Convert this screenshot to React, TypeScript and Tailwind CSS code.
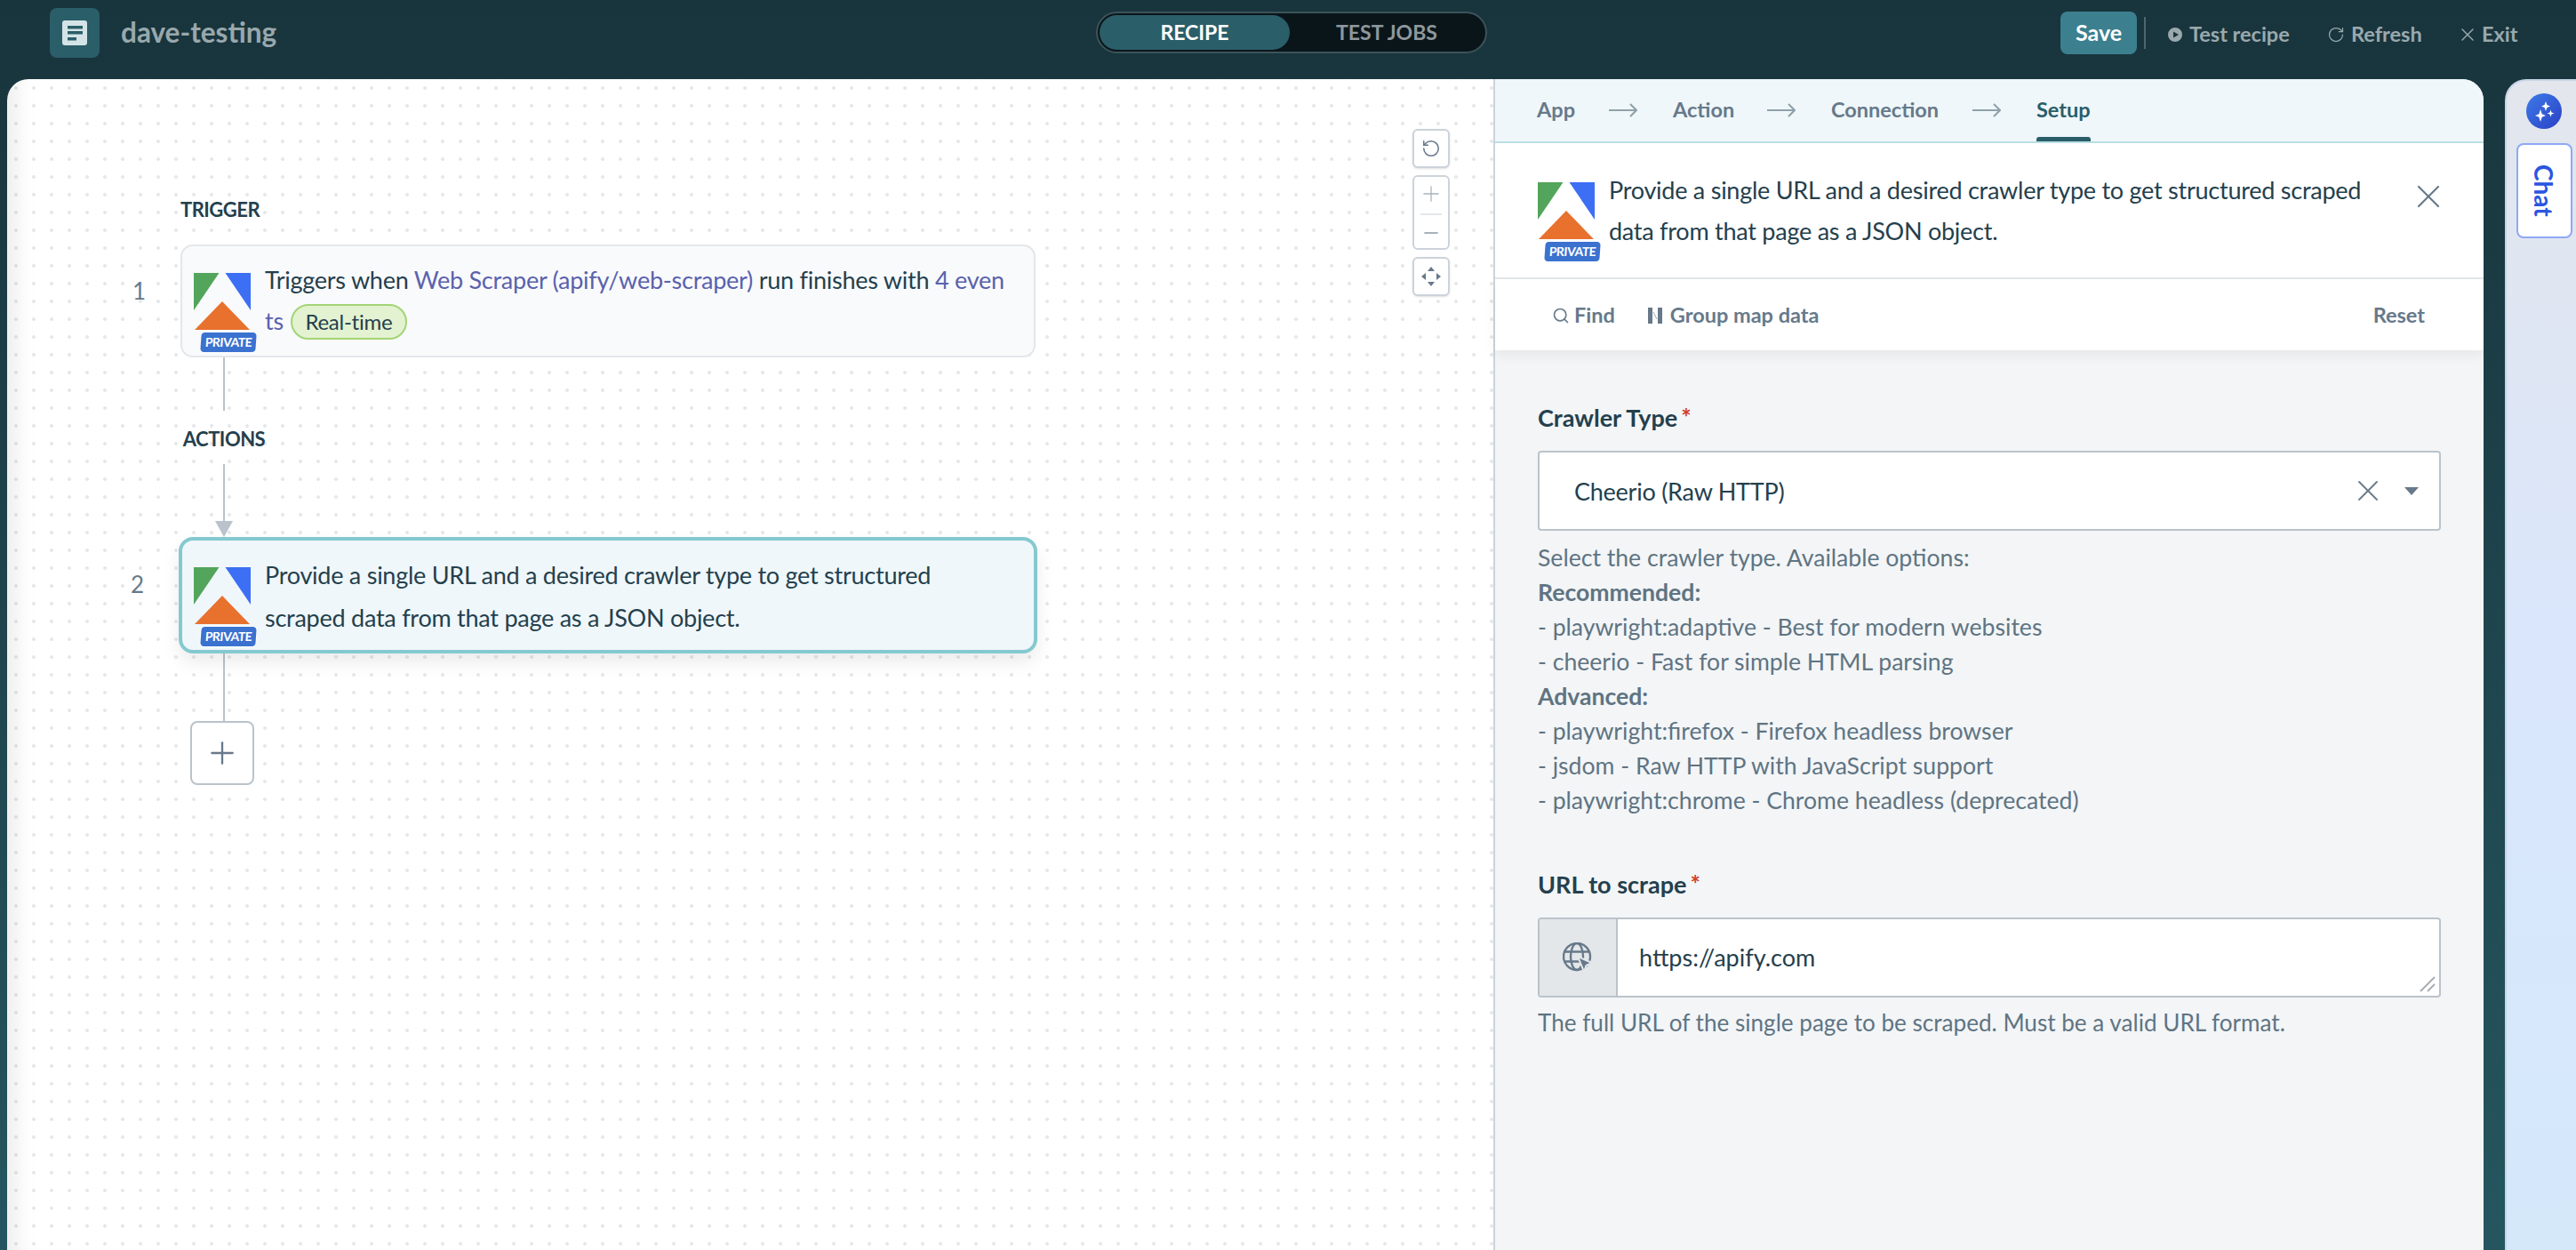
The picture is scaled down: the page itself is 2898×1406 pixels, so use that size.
import { Minus, Plus, RotateCcw, RotateCw, Search, X } from "lucide-react"

function ApifyLogo({ ringed }: { ringed?: boolean }) {
  return (
    <div className="relative h-[95px] w-[70px] shrink-0">
      <svg width="70" height="70" viewBox="0 0 70 70">
        <polygon points="0,0 28.5,0 0,42" fill="#52a55b" />
        <polygon points="35.5,0 64,0 64,42" fill="#3d6ff5" />
        <polygon points="32,32 63,64 1,64" fill="#e8712e" />
      </svg>
      <span
        className={`absolute left-[8px] top-[67px] flex h-[22px] w-[62px] -skew-x-[4deg] items-center justify-center rounded-[4px] bg-[#3b72d0] text-[14px] font-bold leading-none tracking-[-0.5px] text-white ${ringed ? "ring-1 ring-white" : ""}`}
      >
        PRIVATE
      </span>
    </div>
  )
}

function TabArrow() {
  return (
    <svg width="32" height="16" viewBox="0 0 32 16" fill="none" stroke="#8fa0aa" strokeWidth="2">
      <path d="M0 8h31M24 1l7 7-7 7" />
    </svg>
  )
}

function MoveIcon() {
  return (
    <svg width="26" height="26" viewBox="0 0 26 26" fill="#67798a">
      <polygon points="13,2 17,7 9,7" />
      <polygon points="13,24 17,19 9,19" />
      <polygon points="2,13 7,9 7,17" />
      <polygon points="24,13 19,9 19,17" />
    </svg>
  )
}

function GlobeCursor() {
  return (
    <svg width="34" height="34" viewBox="0 0 34 34" fill="none" stroke="#67798a" strokeWidth="2.4">
      <circle cx="16" cy="16" r="15" />
      <ellipse cx="16" cy="16" rx="7" ry="15" />
      <path d="M2.500 10.500h27M2.500 21.500h27" />
      <polygon points="17,16 33,23 26.500,26 24,33" fill="#67798a" stroke="#e3e7ea" strokeWidth="2" />
    </svg>
  )
}

function Sparkles() {
  return (
    <svg width="24" height="24" viewBox="0 0 24 24" fill="white">
      <path d="M14 1l1.400 4.100L19 6.500l-3.600 1.400L14 12l-1.400-4.100L9 6.500l3.600-1.400z" />
      <path d="M8 10l1.700 5.300L14 17l-4.300 1.700L8 24l-1.700-5.300L2 17l4.300-1.700z" />
      <path d="M19.500 10.500l1 3 3 1-3 1-1 3-1-3-3-1 3-1z" />
    </svg>
  )
}

function Label({ children }: { children: string }) {
  return (
    <div className="flex h-[32px] items-center text-[27px] font-bold text-[#24404d]">
      {children}
      <span className="ml-[4px] -translate-y-[1px] text-[#d0402a]">*</span>
    </div>
  )
}

export default function App() {
  return (
    <div className="flex h-[1406px] w-full flex-col overflow-hidden bg-gradient-to-b from-[#18343c] to-[#25565f] font-[Lato,sans-serif] text-[27px] text-[#24404d]">
      <header className="flex h-[89px] shrink-0 pt-[9px]">
        <div className="flex w-[1233px] items-start pl-[56px]">
          <div className="flex h-[56px] w-[56px] items-center justify-center rounded-[8px] bg-[#2a5e69]">
            <svg width="28" height="28" viewBox="0 0 28 28">
              <rect width="28" height="28" rx="3" fill="#d4e4e6" />
              <rect x="6" y="6" width="17" height="3.500" fill="#2a5e69" />
              <rect x="6" y="12" width="17" height="3.500" fill="#2a5e69" />
              <rect x="6" y="19" width="10" height="3.500" fill="#2a5e69" />
            </svg>
          </div>
          <div className="ml-[24px] flex h-[56px] items-center text-[31.5px] font-bold text-[#98a8ac]">dave-testing</div>
        </div>
        <div className="mt-[4px] flex h-[47px] w-[440px] items-center rounded-full border-2 border-[#3c535a] bg-[#0a151a] p-[2px] text-[23px] font-bold">
          <div className="flex h-[39px] w-[214px] items-center justify-center rounded-full bg-[#2a5e69] text-white">RECIPE</div>
          <div className="flex-1 text-center text-[#8f989c]">TEST JOBS</div>
        </div>
        <div className="flex flex-1 items-start whitespace-nowrap pl-[645px] text-[23.5px] font-bold text-[#9aa9ad]">
          <button className="mt-[4px] flex h-[48px] w-[86px] shrink-0 items-center justify-center rounded-[8px] bg-[#3c808f] text-[25px] text-white">Save</button>
          <div className="ml-[8px] mt-[10px] h-[36px] w-[2px] shrink-0 bg-[#4f666c]" />
          <div className="ml-[25px] mt-[14px] flex h-[32px] items-center">
            <svg width="16" height="16" viewBox="0 0 16 16" fill="#9aa9ad">
              <path fillRule="evenodd" d="M8 0a8 8 0 1 1 0 16A8 8 0 0 1 8 0zM6 4.500v7L12 8z" />
            </svg>
            <span className="ml-[8px] w-[112px]">Test recipe</span>
          </div>
          <div className="ml-[43px] mt-[14px] flex h-[32px] items-center">
            <RotateCw size={20} strokeWidth={1.5} />
            <span className="ml-[7px] w-[78px]">Refresh</span>
          </div>
          <div className="ml-[41px] mt-[14px] flex h-[32px] items-center">
            <X size={24} strokeWidth={1.4} />
            <span className="ml-[4px]">Exit</span>
          </div>
        </div>
      </header>

      <div className="flex min-h-0 flex-1 pl-[8px]">
        <main className="flex w-[2786px] overflow-hidden rounded-t-[24px]">
          <section className="relative w-[1674px] shrink-0 border-r-2 border-[#ccd3da] bg-white bg-[radial-gradient(circle,#e6e8ea_1.8px,transparent_2.2px)] bg-[length:20px_20px] pl-[195px] pt-[130px] shadow-[inset_28px_0_24px_-18px_rgba(0,0,0,0.08)]">
            <div className="flex h-[32px] items-center text-[22px] font-bold tracking-[-0.5px]">TRIGGER</div>

            <div className="relative mt-[24px] flex h-[127px] w-[962px] gap-[10px] rounded-[14px] border-2 border-[#e3e7ea] bg-[#f9fafc] pl-[13px] pt-[15px] leading-[46px] tracking-[-0.25px]">
              <span className="absolute -left-[56px] top-[27px] text-[26px] text-[#67798a]">1</span>
              <div className="mt-[15px]">
                <ApifyLogo />
              </div>
              <div>
                Triggers when <span className="text-[#5a62ad]">Web Scraper (apify/web-scraper)</span> run finishes with{" "}
                <span className="text-[#5a62ad]">
                  4 even
                  <br />
                  ts
                </span>
                <span className="ml-[8px] inline-flex h-[40px] w-[131px] items-center justify-center rounded-full border-2 border-[#a3d477] bg-[#e3f2d0] text-[24px]">Real-time</span>
              </div>
            </div>

            <div className="flex w-[98px] flex-col items-center">
              <div className="h-[60px] w-[2px] bg-[#bac3cb]" />
              <div className="mt-[15px] flex h-[32px] items-center text-[22px] font-bold tracking-[-0.5px]">ACTIONS</div>
              <div className="mt-[13px] h-[64px] w-[2px] bg-[#bac3cb]" />
              <div className="h-0 w-0 border-x-[10px] border-t-[18px] border-x-transparent border-t-[#bac3cb]" />
            </div>

            <div className="relative -ml-[2px] flex h-[131px] w-[966px] gap-[10px] rounded-[16px] border-4 border-[#84c9cf] bg-[#eff7fa] pl-[13px] pt-[15px] leading-[48px] tracking-[-0.25px] shadow-[0_10px_20px_rgba(0,0,0,0.08)]">
              <span className="absolute -left-[58px] top-[25px] text-[26px] text-[#67798a]">2</span>
              <div className="mt-[15px]">
                <ApifyLogo ringed />
              </div>
              <div>
                Provide a single URL and a desired crawler type to get structured
                <br />
                scraped data from that page as a JSON object.
              </div>
            </div>

            <div className="flex w-[98px] flex-col items-center">
              <div className="h-[76px] w-[2px] bg-[#bac3cb]" />
            </div>
            <button className="ml-[11px] flex h-[72px] w-[72px] items-center justify-center rounded-[8px] border-2 border-[#bac3cb] bg-white text-[#67798a]">
              <Plus size={40} strokeWidth={1.4} />
            </button>

            <div className="absolute right-[49px] top-[56px] flex w-[42px] flex-col gap-[8px] text-[#67798a]">
              <div className="flex h-[44px] items-center justify-center rounded-[6px] border-2 border-[#ccd3da] bg-white shadow-sm">
                <RotateCcw size={22} strokeWidth={1.7} />
              </div>
              <div className="flex h-[84px] flex-col items-center justify-between rounded-[6px] border-2 border-[#ccd3da] bg-white py-[5px] text-[#aab5bd]">
                <Plus size={28} strokeWidth={1.1} />
                <div className="h-[2px] w-[24px] bg-[#e3e7ea]" />
                <Minus size={24} strokeWidth={1.6} className="text-[#8b99a5]" />
              </div>
              <div className="flex h-[44px] items-center justify-center rounded-[6px] border-2 border-[#ccd3da] bg-white shadow-sm">
                <MoveIcon />
              </div>
            </div>
          </section>

          <section className="flex min-w-0 flex-1 flex-col bg-[#f3f5f7]">
            <div className="flex h-[72px] shrink-0 items-center border-b-2 border-[#b9dfe5] bg-[#eff7fa] pl-[47px] text-[23.5px] font-bold text-[#67798a]">
              <span className="w-[81px]">App</span>
              <TabArrow />
              <span className="ml-[40px] w-[106px]">Action</span>
              <TabArrow />
              <span className="ml-[40px] w-[159px]">Connection</span>
              <TabArrow />
              <span className="relative ml-[40px] flex h-[70px] items-center text-[#2a5e69]">
                Setup
                <span className="absolute inset-x-0 bottom-0 h-[5px] rounded-t-[3px] bg-[#2a5e69]" />
              </span>
            </div>

            <div className="relative flex h-[153px] shrink-0 gap-[10px] border-b-2 border-[#e3e7ea] bg-white pl-[48px] pt-[30px] leading-[46px] tracking-[-0.25px]">
              <div className="pt-[14px]">
                <ApifyLogo />
              </div>
              <div>
                Provide a single URL and a desired crawler type to get structured scraped
                <br />
                data from that page as a JSON object.
              </div>
              <X size={44} strokeWidth={1.2} className="absolute right-[40px] top-[38px] text-[#67798a]" />
            </div>

            <div className="z-10 flex h-[80px] shrink-0 items-center bg-white pl-[64px] pr-[66px] pt-[2px] text-[23.5px] font-bold text-[#67798a] shadow-[0_6px_14px_rgba(0,0,0,0.06)]">
              <Search size={20} strokeWidth={2} />
              <span className="ml-[5px]">Find</span>
              <svg width="16" height="18" viewBox="0 0 16 18" className="ml-[37px]" fill="#67798a">
                <rect width="5" height="18" />
                <rect x="11" width="5" height="18" />
                <path d="M6 5l4 8" stroke="#9aa9b3" fill="none" />
              </svg>
              <span className="ml-[9px]">Group map data</span>
              <span className="ml-auto">Reset</span>
            </div>

            <div className="flex flex-col px-[48px] pt-[60px]">
              <Label>Crawler Type</Label>
              <div className="mt-[21px] flex h-[90px] items-center rounded-[4px] border-2 border-[#bac3cb] bg-white pl-[39px] pr-[23px]">
                <span className="flex-1 pt-[2px] tracking-[-0.25px]">Cheerio (Raw HTTP)</span>
                <X size={40} strokeWidth={1.1} className="text-[#67798a]" />
                <div className="ml-[21px] h-0 w-0 border-x-[8px] border-t-[9px] border-x-transparent border-t-[#67798a]" />
              </div>
              <div className="mt-[11px] text-[26.6px] leading-[39px] text-[#5f7482]">
                <div>Select the crawler type. Available options:</div>
                <div className="font-bold">Recommended:</div>
                <div>- playwright:adaptive - Best for modern websites</div>
                <div>- cheerio - Fast for simple HTML parsing</div>
                <div className="font-bold">Advanced:</div>
                <div>- playwright:firefox - Firefox headless browser</div>
                <div>- jsdom - Raw HTTP with JavaScript support</div>
                <div>- playwright:chrome - Chrome headless (deprecated)</div>
              </div>

              <div className="mt-[59px]">
                <Label>URL to scrape</Label>
              </div>
              <div className="relative mt-[21px] flex h-[90px] overflow-hidden rounded-[4px] border-2 border-[#bac3cb] bg-white">
                <div className="flex w-[88px] items-center justify-center border-r-2 border-[#bac3cb] bg-[#e3e7ea]">
                  <GlobeCursor />
                </div>
                <div className="flex items-center pl-[24px]">https://apify.com</div>
                <svg width="18" height="18" viewBox="0 0 18 18" className="absolute bottom-[4px] right-[4px]" stroke="#a9aeb2" strokeWidth="2">
                  <path d="M1 17L17 1M9 17l8-8" />
                </svg>
              </div>
              <div className="mt-[9px] text-[26.1px] leading-[39px] text-[#5f7482]">The full URL of the single page to be scraped. Must be a valid URL format.</div>
            </div>
          </section>
        </main>

        <aside className="ml-[24px] flex flex-1 flex-col items-center rounded-tl-[24px] border-l-2 border-t-2 border-[#c8d4e8] bg-gradient-to-b from-[#e3e6ec] via-[#d9e6fc] to-[#d4e8fa] pl-[6px] pt-[14px]">
          <div className="flex h-[40px] w-[40px] items-center justify-center rounded-full bg-gradient-to-br from-[#3f7ae8] to-[#2b3fc5]">
            <Sparkles />
          </div>
          <div className="mt-[16px] flex h-[107px] w-[63px] items-center justify-center rounded-[8px] border-2 border-[#8fa8f5] bg-white text-[28px] font-bold text-[#2a55e0] [writing-mode:vertical-rl]">
            Chat
          </div>
        </aside>
      </div>
    </div>
  )
}
